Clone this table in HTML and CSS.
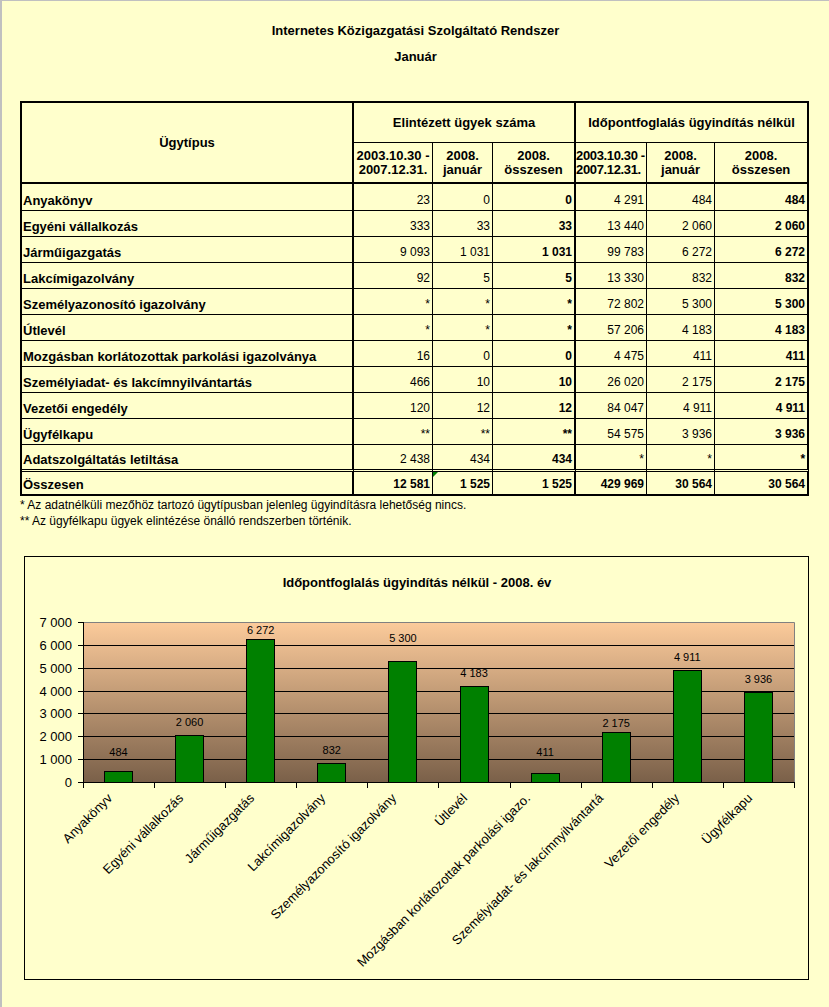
FILE: index.html
```html
<!DOCTYPE html>
<html lang="hu">
<head>
<meta charset="utf-8">
<title>Internetes Közigazgatási Szolgáltató Rendszer</title>
<link rel="stylesheet" href="styles.css">
</head>
<body>
<div class="page">
  <h1 class="title">Internetes Közigazgatási Szolgáltató Rendszer</h1>
  <h2 class="subtitle">Január</h2>

  <table class="stats">
    <colgroup>
      <col class="w1"><col class="w2"><col class="w3"><col class="w4"><col class="w5"><col class="w6"><col class="w7">
    </colgroup>
    <thead>
      <tr class="hr1">
        <th rowspan="2" class="type">Ügytípus</th>
        <th colspan="3" class="grp thick">Elintézett ügyek száma</th>
        <th colspan="3" class="grp thick">Időpontfoglalás ügyindítás nélkül</th>
      </tr>
      <tr class="hr2">
        <th>2003.10.30 -<br>2007.12.31.</th>
        <th>2008.<br>január</th>
        <th class="thick">2008.<br>összesen</th>
        <th class="clip">2003.10.30 -<br>2007.12.31.</th>
        <th>2008.<br>január</th>
        <th class="thick">2008.<br>összesen</th>
      </tr>
    </thead>
    <tbody>
      <tr class="first"><td class="name">Anyakönyv</td><td>23</td><td>0</td><td class="b">0</td><td>4 291</td><td>484</td><td class="b">484</td></tr>
      <tr><td class="name">Egyéni vállalkozás</td><td>333</td><td>33</td><td class="b">33</td><td>13 440</td><td>2 060</td><td class="b">2 060</td></tr>
      <tr><td class="name">Járműigazgatás</td><td>9 093</td><td>1 031</td><td class="b">1 031</td><td>99 783</td><td>6 272</td><td class="b">6 272</td></tr>
      <tr><td class="name">Lakcímigazolvány</td><td>92</td><td>5</td><td class="b">5</td><td>13 330</td><td>832</td><td class="b">832</td></tr>
      <tr><td class="name">Személyazonosító igazolvány</td><td>*</td><td>*</td><td class="b">*</td><td>72 802</td><td>5 300</td><td class="b">5 300</td></tr>
      <tr><td class="name">Útlevél</td><td>*</td><td>*</td><td class="b">*</td><td>57 206</td><td>4 183</td><td class="b">4 183</td></tr>
      <tr><td class="name">Mozgásban korlátozottak parkolási igazolványa</td><td>16</td><td>0</td><td class="b">0</td><td>4 475</td><td>411</td><td class="b">411</td></tr>
      <tr><td class="name">Személyiadat- és lakcímnyilvántartás</td><td>466</td><td>10</td><td class="b">10</td><td>26 020</td><td>2 175</td><td class="b">2 175</td></tr>
      <tr><td class="name">Vezetői engedély</td><td>120</td><td>12</td><td class="b">12</td><td>84 047</td><td>4 911</td><td class="b">4 911</td></tr>
      <tr><td class="name">Ügyfélkapu</td><td>**</td><td>**</td><td class="b">**</td><td>54 575</td><td>3 936</td><td class="b">3 936</td></tr>
      <tr class="last"><td class="name">Adatszolgáltatás letiltása</td><td>2 438</td><td>434</td><td class="b">434</td><td>*</td><td>*</td><td class="b">*</td></tr>
      <tr class="total"><td class="name">Összesen</td><td>12 581</td><td class="flag">1 525</td><td>1 525</td><td>429 969</td><td>30 564</td><td>30 564</td></tr>
    </tbody>
  </table>

  <p class="note first-note">* Az adatnélküli mezőhöz tartozó ügytípusban jelenleg ügyindításra lehetőség nincs.</p>
  <p class="note">** Az ügyfélkapu ügyek elintézése önálló rendszerben történik.</p>

  <div class="chart">
    <svg class="chart-svg" width="783" height="422" viewBox="0 0 783 422">
      <defs>
        <linearGradient id="plotbg" x1="0" y1="0" x2="0" y2="1">
          <stop offset="0" stop-color="#fccb9b"/>
          <stop offset="1" stop-color="#7a6049"/>
        </linearGradient>
      </defs>
      <text class="ct" x="392" y="30" text-anchor="middle">Időpontfoglalás ügyindítás nélkül - 2008. év</text>

      <rect x="58" y="65" width="711" height="160" fill="url(#plotbg)"/>
      <path d="M58 88.5H769M58 111.5H769M58 134.5H769M58 156.5H769M58 179.5H769M58 202.5H769" stroke="#000" stroke-width="1" fill="none"/>
      <path d="M58 65.5H769.5V225" stroke="#808080" stroke-width="1" fill="none"/>

      <g fill="#008000" stroke="#000" stroke-width="1">
        <rect x="79.5" y="214.5" width="28" height="11"/>
        <rect x="150.5" y="178.5" width="28" height="47"/>
        <rect x="221.5" y="82.5" width="28" height="143"/>
        <rect x="292.5" y="206.5" width="28" height="19"/>
        <rect x="363.5" y="104.5" width="28" height="121"/>
        <rect x="435.5" y="129.5" width="28" height="96"/>
        <rect x="506.5" y="216.5" width="28" height="9"/>
        <rect x="577.5" y="175.5" width="28" height="50"/>
        <rect x="648.5" y="113.5" width="28" height="112"/>
        <rect x="719.5" y="135.5" width="28" height="90"/>
      </g>

      <path d="M58.5 65V231M53 225.5H770M53 65.5H58M53 88.5H58M53 111.5H58M53 134.5H58M53 156.5H58M53 179.5H58M53 202.5H58M129.5 225V231M200.5 225V231M271.5 225V231M342.5 225V231M413.5 225V231M485.5 225V231M556.5 225V231M627.5 225V231M698.5 225V231M769.5 225V231" stroke="#000" stroke-width="1" fill="none"/>

      <g class="yl" text-anchor="end">
        <text x="47" y="70">7 000</text>
        <text x="47" y="93">6 000</text>
        <text x="47" y="116">5 000</text>
        <text x="47" y="139">4 000</text>
        <text x="47" y="161">3 000</text>
        <text x="47" y="184">2 000</text>
        <text x="47" y="207">1 000</text>
        <text x="47" y="230">0</text>
      </g>

      <g class="dl" text-anchor="middle">
        <text x="93.5" y="199">484</text>
        <text x="164.6" y="169">2 060</text>
        <text x="235.7" y="77">6 272</text>
        <text x="306.8" y="197">832</text>
        <text x="377.9" y="85">5 300</text>
        <text x="449" y="120">4 183</text>
        <text x="520.1" y="199">411</text>
        <text x="591.2" y="170">2 175</text>
        <text x="662.3" y="104">4 911</text>
        <text x="733.4" y="126">3 936</text>
      </g>

      <g class="xl" text-anchor="end">
        <text transform="translate(88 242) rotate(-45)">Anyakönyv</text>
        <text transform="translate(159 242) rotate(-45)">Egyéni vállalkozás</text>
        <text transform="translate(230 242) rotate(-45)">Járműigazgatás</text>
        <text transform="translate(301 242) rotate(-45)">Lakcímigazolvány</text>
        <text transform="translate(372 242) rotate(-45)">Személyazonosító igazolvány</text>
        <text transform="translate(443 242) rotate(-45)">Útlevél</text>
        <text transform="translate(506 242) rotate(-45)">Mozgásban korlátozottak parkolási igazo.</text>
        <text transform="translate(579 242) rotate(-45)">Személyiadat- és lakcímnyilvántartá</text>
        <text transform="translate(655 242) rotate(-45)">Vezetői engedély</text>
        <text transform="translate(728 242) rotate(-45)">Ügyfélkapu</text>
      </g>
    </svg>
  </div>
</div>
</body>
</html>
```

FILE: styles.css
```css
html {
  background: #ffffcc;
}

body {
  margin: 0;
  min-height: 1006px;
  background: #ffffcc;
  border-top: 1px solid #c0c0c0;
  border-left: 2px solid #c0c0c0;
  font-family: "Liberation Sans", Arial, sans-serif;
  color: #000;
}

.page {
  padding-top: 22px;
}

.title,
.subtitle {
  margin: 0;
  font-size: 13px;
  line-height: 16px;
  font-weight: bold;
  text-align: center;
}

.subtitle {
  margin-top: 10px;
}

/* ---------- table ---------- */
.stats {
  margin: 36px 0 0 18px;
  width: 789px;
  table-layout: fixed;
  border-collapse: separate;
  border-spacing: 0;
  border-top: 2px solid #000;
  border-left: 2px solid #000;
}

.w1 { width: 332px; }
.w2 { width: 79px; }
.w3 { width: 60px; }
.w4 { width: 83px; }
.w5 { width: 71px; }
.w6 { width: 68px; }
.w7 { width: 94px; }

.stats th,
.stats td {
  border-right: 1px solid #000;
  border-bottom: 1px solid #000;
  padding: 0 2px 2px 1px;
  font-size: 12px;
  line-height: 15px;
  vertical-align: bottom;
  text-align: right;
  white-space: nowrap;
  overflow: hidden;
}

.stats th {
  font-size: 13px;
  line-height: 14px;
  font-weight: bold;
  vertical-align: middle;
  text-align: center;
  padding: 0 1px;
}

.stats .thick {
  border-right-width: 2px;
}

.stats th.type {
  border-right-width: 2px;
  border-bottom-width: 2px;
}

.stats .hr1 { height: 40px; }
.stats .hr2 { height: 41px; }

.stats .hr2 th {
  border-bottom-width: 2px;
}

.stats th.clip {
  text-align: left;
  padding: 0;
  letter-spacing: -0.35px;
}

.stats tbody tr { height: 26px; }
.stats tbody tr.first { height: 27px; }
.stats tbody tr.last { height: 27px; }
.stats tbody tr.total { height: 24px; }

.stats td:nth-child(4),
.stats td:nth-child(7) {
  border-right-width: 2px;
}

.stats td.name {
  text-align: left;
  font-weight: bold;
  font-size: 13px;
  border-right-width: 2px;
}

.stats td.b {
  font-weight: bold;
}

.stats tr.last td {
  border-bottom: 3px double #000;
}

.stats tr.total td {
  font-weight: bold;
  border-bottom-width: 2px;
}

.stats td.flag {
  position: relative;
}

.stats td.flag::before {
  content: "";
  position: absolute;
  left: 0;
  top: 0;
  border-top: 5px solid #008000;
  border-right: 5px solid transparent;
}

/* ---------- notes ---------- */
.note {
  margin: 0 0 0 18px;
  font-size: 12px;
  line-height: 16px;
}

.first-note {
  margin-top: 1px;
}

/* ---------- chart ---------- */
.chart {
  margin: 27px 0 0 22px;
  width: 783px;
  height: 422px;
  border: 1px solid #000;
}

.chart-svg {
  display: block;
}

.chart-svg text {
  font-family: "Liberation Sans", Arial, sans-serif;
  fill: #000;
}

.chart-svg .ct {
  font-size: 13px;
  font-weight: bold;
}

.chart-svg .yl text {
  font-size: 13px;
}

.chart-svg .dl text {
  font-size: 11px;
}

.chart-svg .xl text {
  font-size: 13px;
}
```
